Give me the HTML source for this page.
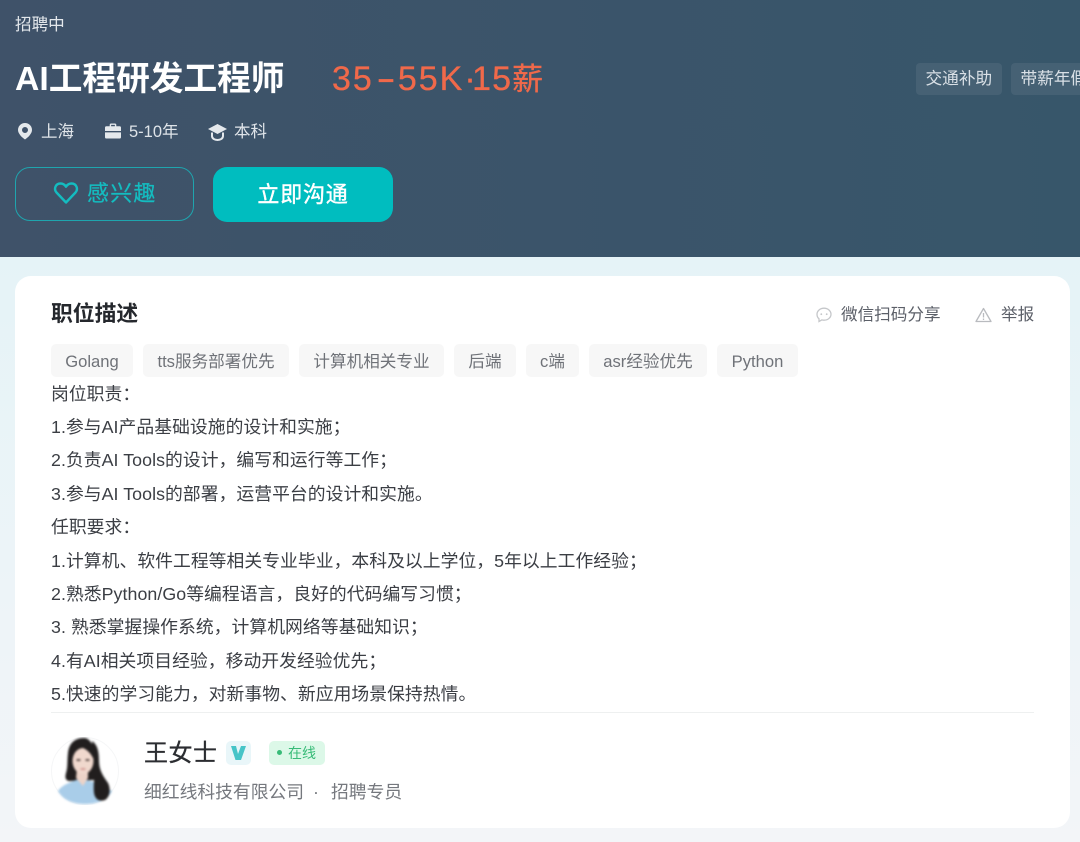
<!DOCTYPE html>
<html lang="zh"><head><meta charset="utf-8"><title>AI工程研发工程师</title>
<style>
*{box-sizing:border-box;margin:0;padding:0}
html,body{width:1080px;height:842px;overflow:hidden}
body{position:relative;font-family:"Liberation Sans","Noto Sans CJK SC",sans-serif;background:linear-gradient(180deg,#e5f3f7 257px,#f3f5f8 842px)}
.a{position:absolute;white-space:nowrap}
#hd{left:0;top:0;width:1080px;height:257px;background:linear-gradient(90deg,#3f5269,#37566a)}
#card{left:15px;top:276px;width:1055px;height:552px;background:#fff;border-radius:16px}
.m{font-size:16.500px;line-height:24px;color:#dfe4e9;top:120px}
.w{top:63px;height:32px;background:rgba(255,255,255,.07);border-radius:4px;color:#d9e0e6;font-size:16.700px;line-height:32px;padding:0 9.500px}
.t{top:344px;height:33px;line-height:35px;background:#f7f7f7;border-radius:5px;color:#6f7278;font-size:16.600px;text-align:center}
.l{left:51px;font-size:17.800px;line-height:30px;color:#3b3e44;letter-spacing:.06px}
</style></head><body>
<div class="a" id="hd"></div>
<div class="a" id="card"></div>
<div class="a" style="left:15px;top:13px;font-size:16.600px;line-height:24px;color:#e3e7eb">招聘中</div>
<div class="a" style="left:15px;top:56px;font-size:33.700px;line-height:46px;font-weight:700;color:#fff">AI工程研发工程师</div>
<div class="a" style="left:332px;top:56px;font-size:34px;line-height:46px;color:#f0694a;letter-spacing:2px;-webkit-text-stroke:.3px #f0694a">35<span style="display:inline-block;width:24px;text-align:center;transform:scaleX(1.700);letter-spacing:0">-</span>55K<span style="letter-spacing:-3.500px">·</span><span style="letter-spacing:1px">15</span><span style="font-size:31px;letter-spacing:0">薪</span></div>
<div class="a w" style="left:916px;width:86px">交通补助</div>
<div class="a w" style="left:1011px;width:90px">带薪年假</div>
<svg class="a" style="left:17px;top:122px" width="16" height="18" viewBox="0 0 16 18"><path fill="#e4e8ec" fill-rule="evenodd" d="M8 1a7 7 0 0 1 7 7c0 3.600-4 7.500-7 9.500C5 15.500 1 11.600 1 8a7 7 0 0 1 7-7zm0 4a3 3 0 1 0 0 6 3 3 0 0 0 0-6z"/></svg>
<div class="a m" style="left:41px">上海</div>
<svg class="a" style="left:105px;top:123px" width="16" height="16" viewBox="0 0 17 16"><path fill="#e4e8ec" d="M5 3V1.500A1.500 1.500 0 0 1 6.500 0h4A1.500 1.500 0 0 1 12 1.500V3h3.500A1.500 1.500 0 0 1 17 4.500V8H0V4.500A1.500 1.500 0 0 1 1.500 3zm1.500 0h4V1.500h-4zM0 9.500h17v5a1.500 1.500 0 0 1-1.500 1.500h-14A1.500 1.500 0 0 1 0 14.500z"/></svg>
<div class="a m" style="left:129px">5-10年</div>
<svg class="a" style="left:208px;top:124px" width="19" height="17" viewBox="0 0 19 17"><path fill="#e4e8ec" d="M9.500 0 19 5l-9.500 5L0 5z"/><path fill="none" stroke="#e4e8ec" stroke-width="2" d="M4 8.500V12c0 2.500 2.500 4 5.500 4s5.500-1.500 5.500-4V8.500"/></svg>
<div class="a m" style="left:234px">本科</div>
<div class="a" style="left:15px;top:167px;width:179px;height:54px;border:1.500px solid #1fa5ae;border-radius:15px"></div>
<svg class="a" style="left:53px;top:181px" width="26" height="24" viewBox="0 0 26 24"><path fill="none" stroke="#14bcc0" stroke-width="2.400" stroke-linejoin="round" d="M13 21.500 3.500 11.500C.5 8 2.500 2.500 7.500 2.500c2.500 0 4.300 1.300 5.500 3.200 1.200-1.900 3-3.200 5.500-3.200 5 0 7 5.500 4 9z"/></svg>
<div class="a" style="left:87px;top:179px;font-size:22px;line-height:30px;color:#14bcc0;letter-spacing:1.200px;-webkit-text-stroke:.2px #14bcc0">感兴趣</div>
<div class="a" style="left:213px;top:167px;width:180px;height:55px;background:#00bdbf;border-radius:14px;color:#fff;font-size:22px;line-height:55px;text-align:center;letter-spacing:.8px;-webkit-text-stroke:.4px #fff">立即沟通</div>
<div class="a" style="left:51px;top:299px;font-size:21.800px;line-height:30px;font-weight:700;color:#25282d">职位描述</div>
<svg class="a" style="left:816px;top:307px" width="16" height="16" viewBox="0 0 16 16"><path fill="none" stroke="#c5c7ca" stroke-width="1.300" d="M8 1.200c3.900 0 7 2.700 7 6 0 3.300-3.100 6-7 6-.8 0-1.500-.1-2.200-.3L3 14.500v-2.700C1.700 10.700 1 9 1 7.200c0-3.300 3.100-6 7-6z"/><circle cx="5.300" cy="7.200" r=".9" fill="#c5c7ca"/><circle cx="10.700" cy="7.200" r=".9" fill="#c5c7ca"/></svg>
<div class="a" style="left:841px;top:303px;font-size:16.600px;line-height:24px;color:#5b5f68">微信扫码分享</div>
<svg class="a" style="left:975px;top:307px" width="17" height="16" viewBox="0 0 17 16"><path fill="none" stroke="#b9bbbf" stroke-width="1.300" stroke-linejoin="round" d="M8.500 1.500 16 14.500H1z"/><path stroke="#b9bbbf" stroke-width="1.300" d="M8.500 6v4.500M8.500 11.500v1.500"/></svg>
<div class="a" style="left:1001px;top:303px;font-size:16.600px;line-height:24px;color:#5b5f68">举报</div>
<div class="a t" style="left:51px;width:82px">Golang</div>
<div class="a t" style="left:143px;width:146px">tts服务部署优先</div>
<div class="a t" style="left:299px;width:145px">计算机相关专业</div>
<div class="a t" style="left:454px;width:62px">后端</div>
<div class="a t" style="left:526px;width:53px">c端</div>
<div class="a t" style="left:589px;width:118px">asr经验优先</div>
<div class="a t" style="left:717px;width:81px">Python</div>
<div class="a l" style="top:379px">岗位职责：</div>
<div class="a l" style="top:412px">1.参与AI产品基础设施的设计和实施；</div>
<div class="a l" style="top:445px">2.负责AI Tools的设计，编写和运行等工作；</div>
<div class="a l" style="top:479px">3.参与AI Tools的部署，运营平台的设计和实施。</div>
<div class="a l" style="top:512px">任职要求：</div>
<div class="a l" style="top:546px">1.计算机、软件工程等相关专业毕业，本科及以上学位，5年以上工作经验；</div>
<div class="a l" style="top:579px">2.熟悉Python/Go等编程语言，良好的代码编写习惯；</div>
<div class="a l" style="top:612px">3. 熟悉掌握操作系统，计算机网络等基础知识；</div>
<div class="a l" style="top:646px">4.有AI相关项目经验，移动开发经验优先；</div>
<div class="a l" style="top:679px">5.快速的学习能力，对新事物、新应用场景保持热情。</div>
<div class="a" style="left:51px;top:712px;width:983px;height:1px;background:#eef0f0"></div>
<svg class="a" style="left:51px;top:737px" width="68" height="68" viewBox="0 0 68 68"><circle cx="34" cy="34" r="33.500" fill="#fff" stroke="#f5f6f7"/><g style="filter:blur(1px)"><path fill="#211e1e" d="M33 1C23 1 18 7 17 16c-1 8 0 14-2 20-1 4-1 7 3 8l25-1c4-6 4-12 3-18-1-7-2-12-4-17C39 4 37 1 33 1z"/><path fill="#a9cde9" d="M7 54c3-5 10-8 18-11l6-1 12 3 10 4 8 5C57 63 46 67 34 67S12 63 7 54z"/><path fill="#ecd3c8" d="M26 31h11v10l-5 8-7-8z"/><ellipse cx="32" cy="24" rx="10.500" ry="13" fill="#f0d8cd"/><path fill="#211e1e" d="M21 20c1-5 5-9 9-10 5 2 9 5 12 11l1-10-9-6-11 3z"/><path fill="#211e1e" d="M41 4c6 4 7 12 7 20 0 9 4 15 9 22 3 6 2 14-3 17-6 2-10-1-11-7-1-8 1-16 0-24 0-9-1-18-2-28z"/><ellipse cx="27.500" cy="23" rx="2.200" ry="1" fill="#5a4a46"/><ellipse cx="36.500" cy="23" rx="2.200" ry="1" fill="#5a4a46"/><ellipse cx="32" cy="32" rx="2.800" ry=".9" fill="#cf8f8b"/></g></svg>
<div class="a" style="left:144px;top:737px;font-size:24px;line-height:34px;color:#2b2d31;letter-spacing:.5px;-webkit-text-stroke:.3px #2b2d31">王女士</div>
<div class="a" style="left:226px;top:741px;width:25px;height:24px;background:#e9f6f9;border-radius:5px"></div>
<svg class="a" style="left:230px;top:745px" width="17" height="16" viewBox="0 0 17 16"><path fill="#47c4c8" d="M1 1h5l2 8 3-8h5l-5 14H5.500z"/></svg>
<div class="a" style="left:269px;top:741px;width:56px;height:24px;background:#dcf8e8;border-radius:5px"></div>
<div class="a" style="left:277px;top:750px;width:5px;height:5px;background:#38bb78;border-radius:50%"></div>
<div class="a" style="left:288px;top:743px;font-size:14px;line-height:20px;color:#38bb78">在线</div>
<div class="a" style="left:144px;top:780px;font-size:17.800px;line-height:24px;color:#75787e">细红线科技有限公司</div>
<div class="a" style="left:313px;top:780px;font-size:17.800px;line-height:24px;color:#75787e">·</div>
<div class="a" style="left:331px;top:780px;font-size:17.800px;line-height:24px;color:#75787e">招聘专员</div>
</body></html>
